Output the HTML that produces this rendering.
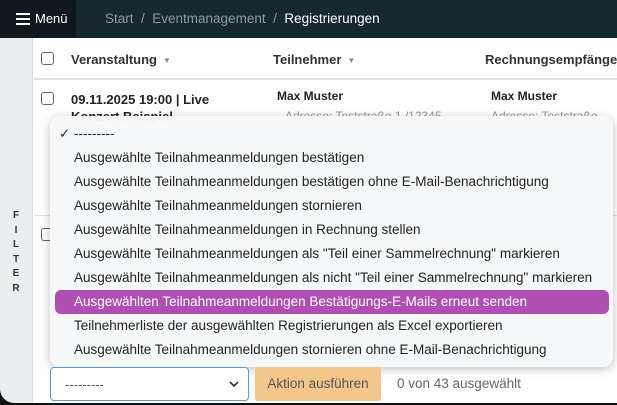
<!DOCTYPE html>
<html><head><meta charset="utf-8"><style>
*{box-sizing:border-box;margin:0;padding:0}
body{width:617px;height:405px;overflow:hidden;background:#fff;font-family:"Liberation Sans",Arial,sans-serif;position:relative;color:#222}
.nav{position:absolute;left:0;top:0;width:617px;height:38px;background:#172831}
.menu{position:absolute;left:0;top:0;width:76px;height:38px;background:#0f191d;color:#fff;font-size:13px;line-height:38px;padding-left:35px}
.ham{position:absolute;left:16px;top:13px;width:14px;height:12px;border-top:2px solid #fff;border-bottom:2px solid #fff}
.ham:after{content:"";position:absolute;left:0;top:3px;width:14px;height:2px;background:#fff}
.bc{position:absolute;left:105px;top:0;line-height:38px;font-size:13.5px;color:#8b99a1}
.bc b{font-weight:normal;color:#fff}
.blk{position:absolute;left:0;top:330px;width:30px;height:75px;background:#111}
.side{position:absolute;left:0;top:38px;width:33px;height:365px;background:#ebedef;border-right:1px solid #d9dcdf;border-bottom-left-radius:14px}
.filter{position:absolute;left:11px;top:171px;font-size:10px;font-weight:bold;color:#333;line-height:14.5px;text-align:center;width:10px}
.hdr{position:absolute;left:34px;top:38px;width:583px;height:42px;border-bottom:2px solid #dee2e6;font-size:13px;font-weight:bold;color:#333}
.cb{position:absolute;width:13px;height:13px;border:1px solid #666;border-radius:3px;background:#fff}
.hdr>span{position:absolute;top:14px;white-space:nowrap}
.tri{font-size:8px;color:#888;margin-left:6px;vertical-align:1px}
.row{position:absolute;font-size:12px;font-weight:bold;white-space:nowrap}
.dd{position:absolute;left:50px;top:116px;width:563px;height:251px;background:rgba(246,248,249,.97);border-radius:10px;box-shadow:0 2px 10px rgba(0,0,0,.25);font-size:13.5px;color:#222}
.it{position:absolute;left:24px;height:24px;line-height:24px;white-space:nowrap}
.hl{position:absolute;left:5px;top:174px;width:554px;height:24px;background:#b04eb4;border-radius:6px}
.sel{position:absolute;left:50px;top:367px;width:199px;height:34px;border:1px solid #5b9bd5;border-radius:4px;background:#fff;font-size:13px;color:#555;padding:9px 0 0 14px}
.sel svg{position:absolute;right:9px;top:13px}
.btn{position:absolute;left:255px;top:367px;width:126px;height:34px;background:#f3c68b;border-radius:3px;font-size:13.5px;color:#555;text-align:center;line-height:34px}
.cnt{position:absolute;left:397px;top:376px;font-size:13.5px;color:#666}
.bot{position:absolute;left:0;top:403px;width:617px;height:2px;background:#111}
</style></head><body>
<div class="nav"></div>
<div class="menu"><div class="ham"></div>Menü</div>
<div class="bc">Start &nbsp;/&nbsp; Eventmanagement &nbsp;/&nbsp; <b>Registrierungen</b></div>
<div class="blk"></div>
<div class="side"><div class="filter">F<br>I<br>L<br>T<br>E<br>R</div></div>
<div class="hdr">
<div class="cb" style="left:7px;top:14px"></div>
<span style="left:37px">Veranstaltung<span class="tri">▼</span></span>
<span style="left:239px">Teilnehmer<span class="tri">▼</span></span>
<span style="left:451px">Rechnungsempfänger</span>
</div>
<div class="cb" style="left:41px;top:92px"></div>
<div class="row" style="left:71px;top:92px;font-size:13px">09.11.2025 19:00 | Live</div>
<div class="row" style="left:71px;top:109px;font-size:13px">Konzert Beispiel</div>
<div class="row" style="left:277px;top:89px">Max Muster</div>
<div class="row" style="left:491px;top:89px">Max Muster</div>
<div class="row" style="left:285px;top:109px;font-weight:normal;color:#999">Adresse: Teststraße 1 /12345</div>
<div class="row" style="left:491px;top:109px;font-weight:normal;color:#999">Adresse: Teststraße</div>
<div style="position:absolute;left:34px;top:215px;width:583px;border-top:1px solid #dee2e6"></div>
<div class="cb" style="left:41px;top:228px"></div>
<div class="dd">
<div class="hl"></div>
<div class="it" style="left:9px;top:6px">✓ ---------</div>
<div class="it" style="top:30px">Ausgewählte Teilnahmeanmeldungen bestätigen</div>
<div class="it" style="top:54px">Ausgewählte Teilnahmeanmeldungen bestätigen ohne E-Mail-Benachrichtigung</div>
<div class="it" style="top:78px">Ausgewählte Teilnahmeanmeldungen stornieren</div>
<div class="it" style="top:102px">Ausgewählte Teilnahmeanmeldungen in Rechnung stellen</div>
<div class="it" style="top:126px">Ausgewählte Teilnahmeanmeldungen als "Teil einer Sammelrechnung" markieren</div>
<div class="it" style="top:150px">Ausgewählte Teilnahmeanmeldungen als nicht "Teil einer Sammelrechnung" markieren</div>
<div class="it" style="top:174px;color:#fff">Ausgewählten Teilnahmeanmeldungen Bestätigungs-E-Mails erneut senden</div>
<div class="it" style="top:198px">Teilnehmerliste der ausgewählten Registrierungen als Excel exportieren</div>
<div class="it" style="top:222px">Ausgewählte Teilnahmeanmeldungen stornieren ohne E-Mail-Benachrichtigung</div>
</div>
<div class="sel">---------<svg width="10" height="7" viewBox="0 0 10 7"><path d="M1 1l4 4 4-4" fill="none" stroke="#333" stroke-width="1.6"/></svg></div>
<div class="btn">Aktion ausführen</div>
<div class="cnt">0 von 43 ausgewählt</div>
<div class="bot"></div>
</body></html>
